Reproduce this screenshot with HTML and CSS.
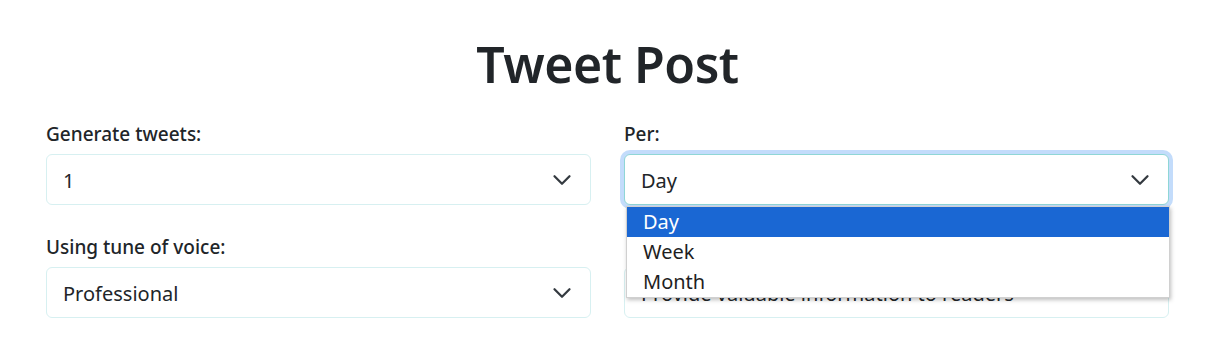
FILE: index.html
```html
<!DOCTYPE html>
<html lang="en">
<head>
<meta charset="utf-8">
<title>Tweet Post</title>
<link rel="stylesheet" href="styles.css">
</head>
<body>
<main class="page">
  <h1 class="title">Tweet Post</h1>
  <form class="form-grid">
    <div class="field">
      <label class="label">Generate tweets:</label>
      <div class="select">
        <span class="value">1</span>
        <svg class="chev" viewBox="0 0 16 16" width="20" height="20"><path d="m2 5 6 6 6-6" fill="none" stroke="#343a40" stroke-width="1.8" stroke-linecap="round" stroke-linejoin="round"/></svg>
      </div>
    </div>
    <div class="field">
      <label class="label">Per:</label>
      <div class="select-wrap">
        <div class="select focused">
          <span class="value">Day</span>
          <svg class="chev" viewBox="0 0 16 16" width="20" height="20"><path d="m2 5 6 6 6-6" fill="none" stroke="#343a40" stroke-width="1.8" stroke-linecap="round" stroke-linejoin="round"/></svg>
        </div>
        <ul class="dropdown">
          <li class="opt active">Day</li>
          <li class="opt">Week</li>
          <li class="opt">Month</li>
        </ul>
      </div>
    </div>
    <div class="field">
      <label class="label">Using tune of voice:</label>
      <div class="select">
        <span class="value">Professional</span>
        <svg class="chev" viewBox="0 0 16 16" width="20" height="20"><path d="m2 5 6 6 6-6" fill="none" stroke="#343a40" stroke-width="1.8" stroke-linecap="round" stroke-linejoin="round"/></svg>
      </div>
    </div>
    <div class="field">
      <label class="label">&nbsp;</label>
      <div class="select">
        <span class="value">Provide valuable information to readers</span>
      </div>
    </div>
  </form>
</main>
</body>
</html>
```
FILE: styles.css
```css
* { box-sizing: border-box; }
html, body { margin: 0; padding: 0; background: #fff; }
body {
  font-family: "Noto Sans", "Open Sans", "Liberation Sans", sans-serif;
  color: #212529;
}
.page {
  padding: 0 47px 0 46px;
}
.title {
  margin: 0;
  padding-top: 34px;
  text-align: center;
  font-size: 50px;
  font-weight: 600;
  line-height: 60px;
  letter-spacing: -0.5px;
}
.form-grid {
  margin-top: 28px;
  display: grid;
  grid-template-columns: 1fr 1fr;
  column-gap: 33px;
  row-gap: 30px;
}
.field { display: flex; flex-direction: column; }
.label {
  font-size: 19px;
  font-weight: 500;
  line-height: 24px;
  margin-bottom: 8px;
}
.select-wrap { position: relative; }
.select {
  height: 51px;
  border: 1px solid #d7f0f1;
  border-radius: 6px;
  display: flex;
  align-items: center;
  justify-content: space-between;
  padding: 0 18px 0 16px;
  font-size: 20px;
  background: #fff;
}
.select .value { padding-top: 2px; }
.select.focused {
  border-color: #8fd6d6;
  box-shadow: 0 0 0 4px #c3dcfb;
}
.chev { flex: none; }
.dropdown {
  position: absolute;
  top: 52px;
  left: 2px;
  right: -1px;
  margin: 0;
  padding: 0;
  list-style: none;
  background: #fff;
  border: 1px solid #d0d0d0;
  box-shadow: 1px 2px 4px rgba(0,0,0,0.25);
  font-size: 20px;
}
.opt {
  height: 30px;
  line-height: 30px;
  padding-left: 16px;
  color: #1f1f1f;
}
.opt.active {
  background: #1a67d3;
  color: #fff;
}
```
